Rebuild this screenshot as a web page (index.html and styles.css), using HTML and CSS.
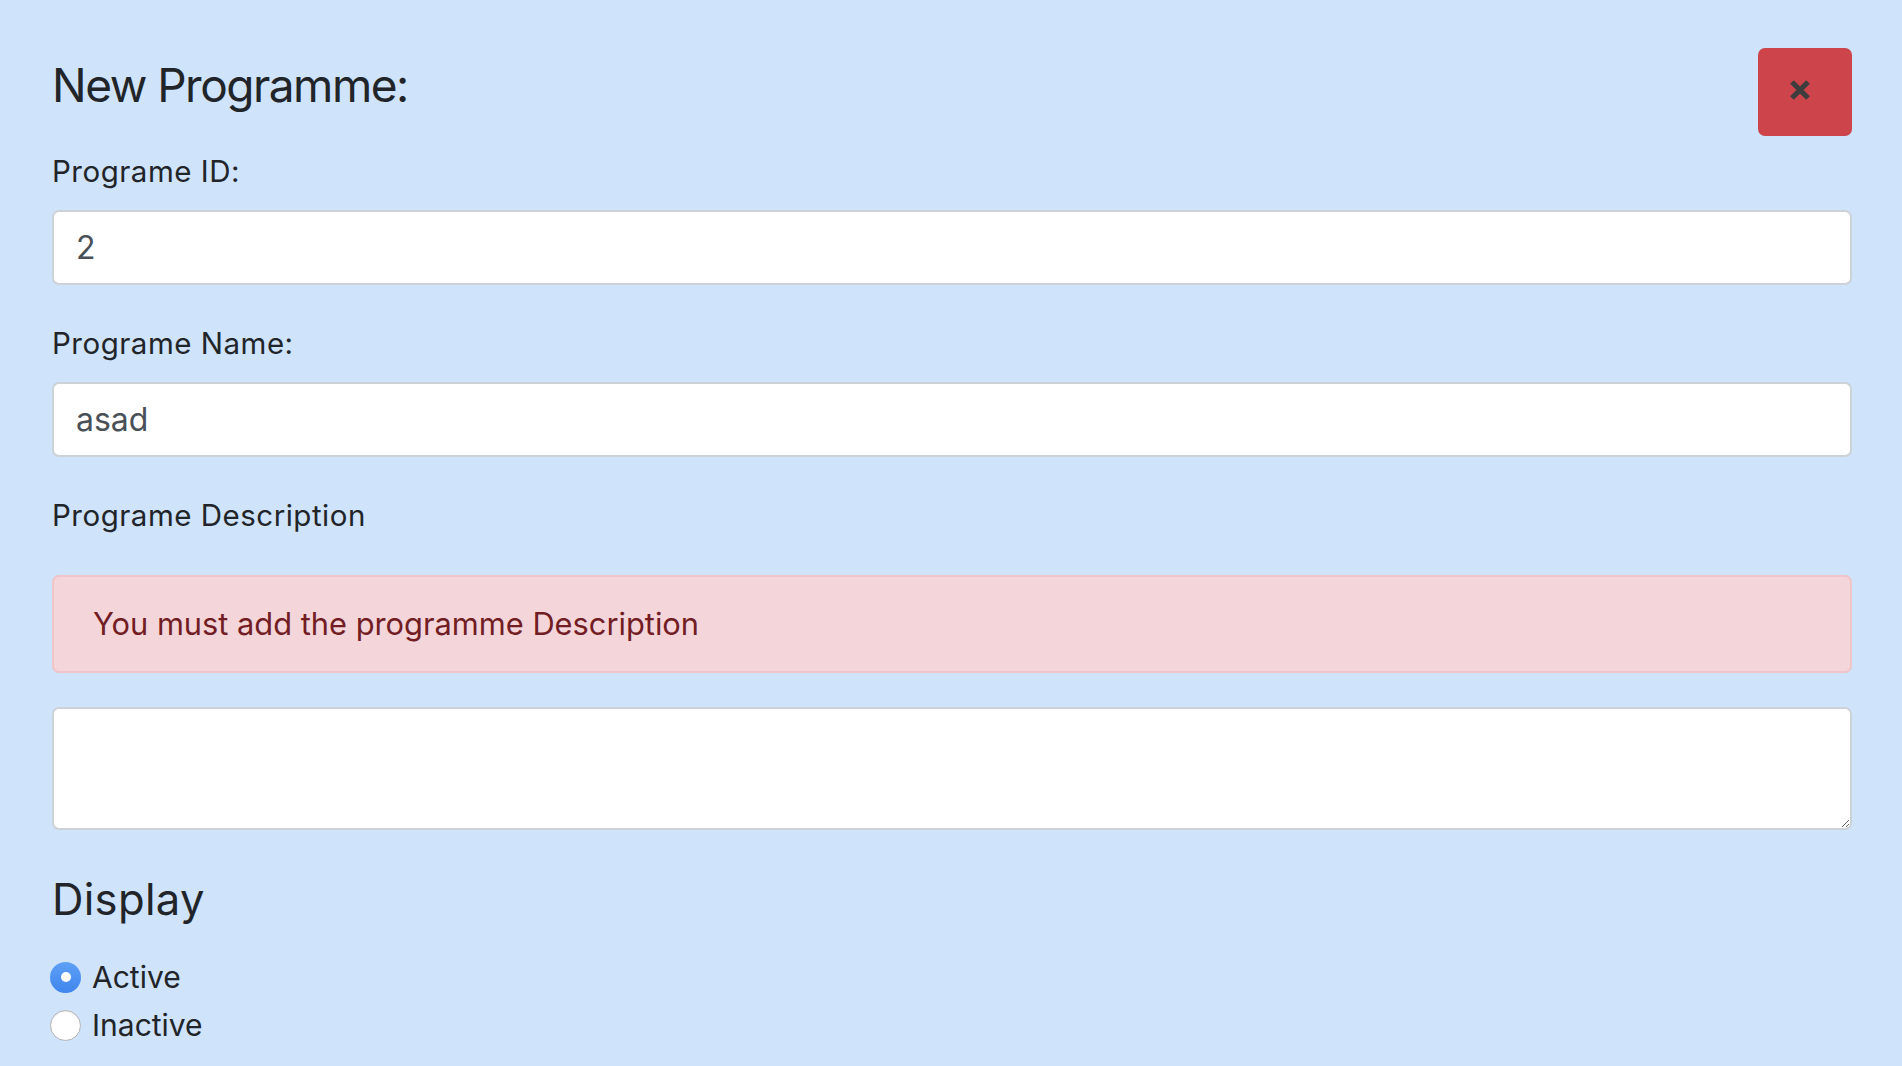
FILE: index.html
```html
<!DOCTYPE html>
<html lang="en">
<head>
<meta charset="utf-8">
<title>New Programme</title>
<link rel="stylesheet" href="styles.css">
</head>
<body>
<div class="page">
  <div class="head">
    <h2 class="title">New Programme:</h2>
    <button class="close-btn" type="button" aria-label="Close">
      <svg class="close-icon" width="22" height="22" viewBox="0 0 22 22"><path d="M3 3 L19 19 M19 3 L3 19" stroke="#3d3d3d" stroke-width="5.2" fill="none"/></svg>
    </button>
  </div>
  <form class="form">
    <div class="group">
      <label class="lbl" for="pid">Programe ID:</label>
      <input class="field" id="pid" type="text" value="2">
    </div>
    <div class="group">
      <label class="lbl" for="pname">Programe Name:</label>
      <input class="field" id="pname" type="text" value="asad">
    </div>
    <div class="group">
      <label class="lbl" for="pdesc">Programe Description</label>
      <div class="alert">You must add the programme Description</div>
      <textarea class="area" id="pdesc"></textarea>
    </div>
    <h4 class="sub">Display</h4>
    <div class="radios">
      <div class="radio-row">
        <input class="radio" type="radio" name="display" id="r1" checked>
        <label class="rlbl" for="r1">Active</label>
      </div>
      <div class="radio-row">
        <input class="radio" type="radio" name="display" id="r2">
        <label class="rlbl" for="r2">Inactive</label>
      </div>
    </div>
  </form>
</div>
</body>
</html>
```

FILE: styles.css
```css
html, body {
  margin: 0;
  padding: 0;
  background: #cfe3fb;
}
body {
  font-family: Inter, "Noto Sans", "Liberation Sans", sans-serif;
  color: #212529;
}
.page {
  padding: 48px 50px 0 52px;
}
.head {
  display: flex;
  justify-content: space-between;
  align-items: flex-start;
}
.title {
  margin: 8px 0 0 0;
  font-size: 46px;
  line-height: 59px;
  font-weight: 400;
  letter-spacing: -1.5px;
}
.close-btn {
  width: 94px;
  height: 88px;
  border: none;
  border-radius: 7px;
  background: #cd444b;
  display: flex;
  align-items: center;
  justify-content: center;
  padding: 0 11px 4px 0;
  cursor: pointer;
}
.close-icon {
  display: block;
}
.form {
  margin-top: 14px;
}
.group {
  display: flex;
  flex-direction: column;
  margin-bottom: 37px;
}
.lbl {
  font-size: 29.5px;
  line-height: 42px;
  letter-spacing: 0.5px;
  margin-bottom: 18px;
}
.field {
  box-sizing: border-box;
  height: 75px;
  width: 100%;
  border: 2px solid #cdd2d7;
  border-radius: 7px;
  background: #fff;
  padding: 0 22px;
  font-family: inherit;
  font-size: 32px;
  color: #495057;
  letter-spacing: 0;
  outline: none;
}
.alert {
  margin-top: 21px;
  box-sizing: border-box;
  height: 98px;
  border: 2px solid #f0c4c9;
  border-radius: 7px;
  background: #f4d6da;
  color: #721c24;
  font-size: 30.8px;
  line-height: 47px;
  padding: 23px 39px;
  letter-spacing: 0;
}
.area {
  margin-top: 34px;
  box-sizing: border-box;
  height: 123px;
  width: 100%;
  border: 2px solid #cdd2d7;
  border-radius: 7px;
  background: #fff;
  font-family: inherit;
  font-size: 32px;
  outline: none;
  display: block;
}
.sub {
  margin: 42px 0 0 0;
  font-size: 43.6px;
  line-height: 56px;
  font-weight: 400;
  letter-spacing: 0.3px;
}
.radios {
  margin-top: 25px;
}
.radio-row {
  display: flex;
  align-items: center;
  height: 48px;
}
.radio {
  -webkit-appearance: none;
  appearance: none;
  box-sizing: border-box;
  width: 31px;
  height: 31px;
  margin: 0 11px 0 -2px;
  border-radius: 50%;
  border: 1px solid #b4b4b4;
  background: #fff;
  box-shadow: inset 0 1px 1px rgba(0,0,0,0.08);
  position: relative;
  flex: none;
}
.radio:checked {
  border: none;
  background: linear-gradient(#5da0f5, #3f86ee);
  box-shadow: none;
}
.radio:checked::after {
  content: "";
  position: absolute;
  left: 50%;
  top: 50%;
  width: 10px;
  height: 10px;
  margin: -5px 0 0 -5px;
  border-radius: 50%;
  background: #fff;
}
.rlbl {
  font-size: 30px;
  line-height: 40px;
  letter-spacing: 0;
}
```
